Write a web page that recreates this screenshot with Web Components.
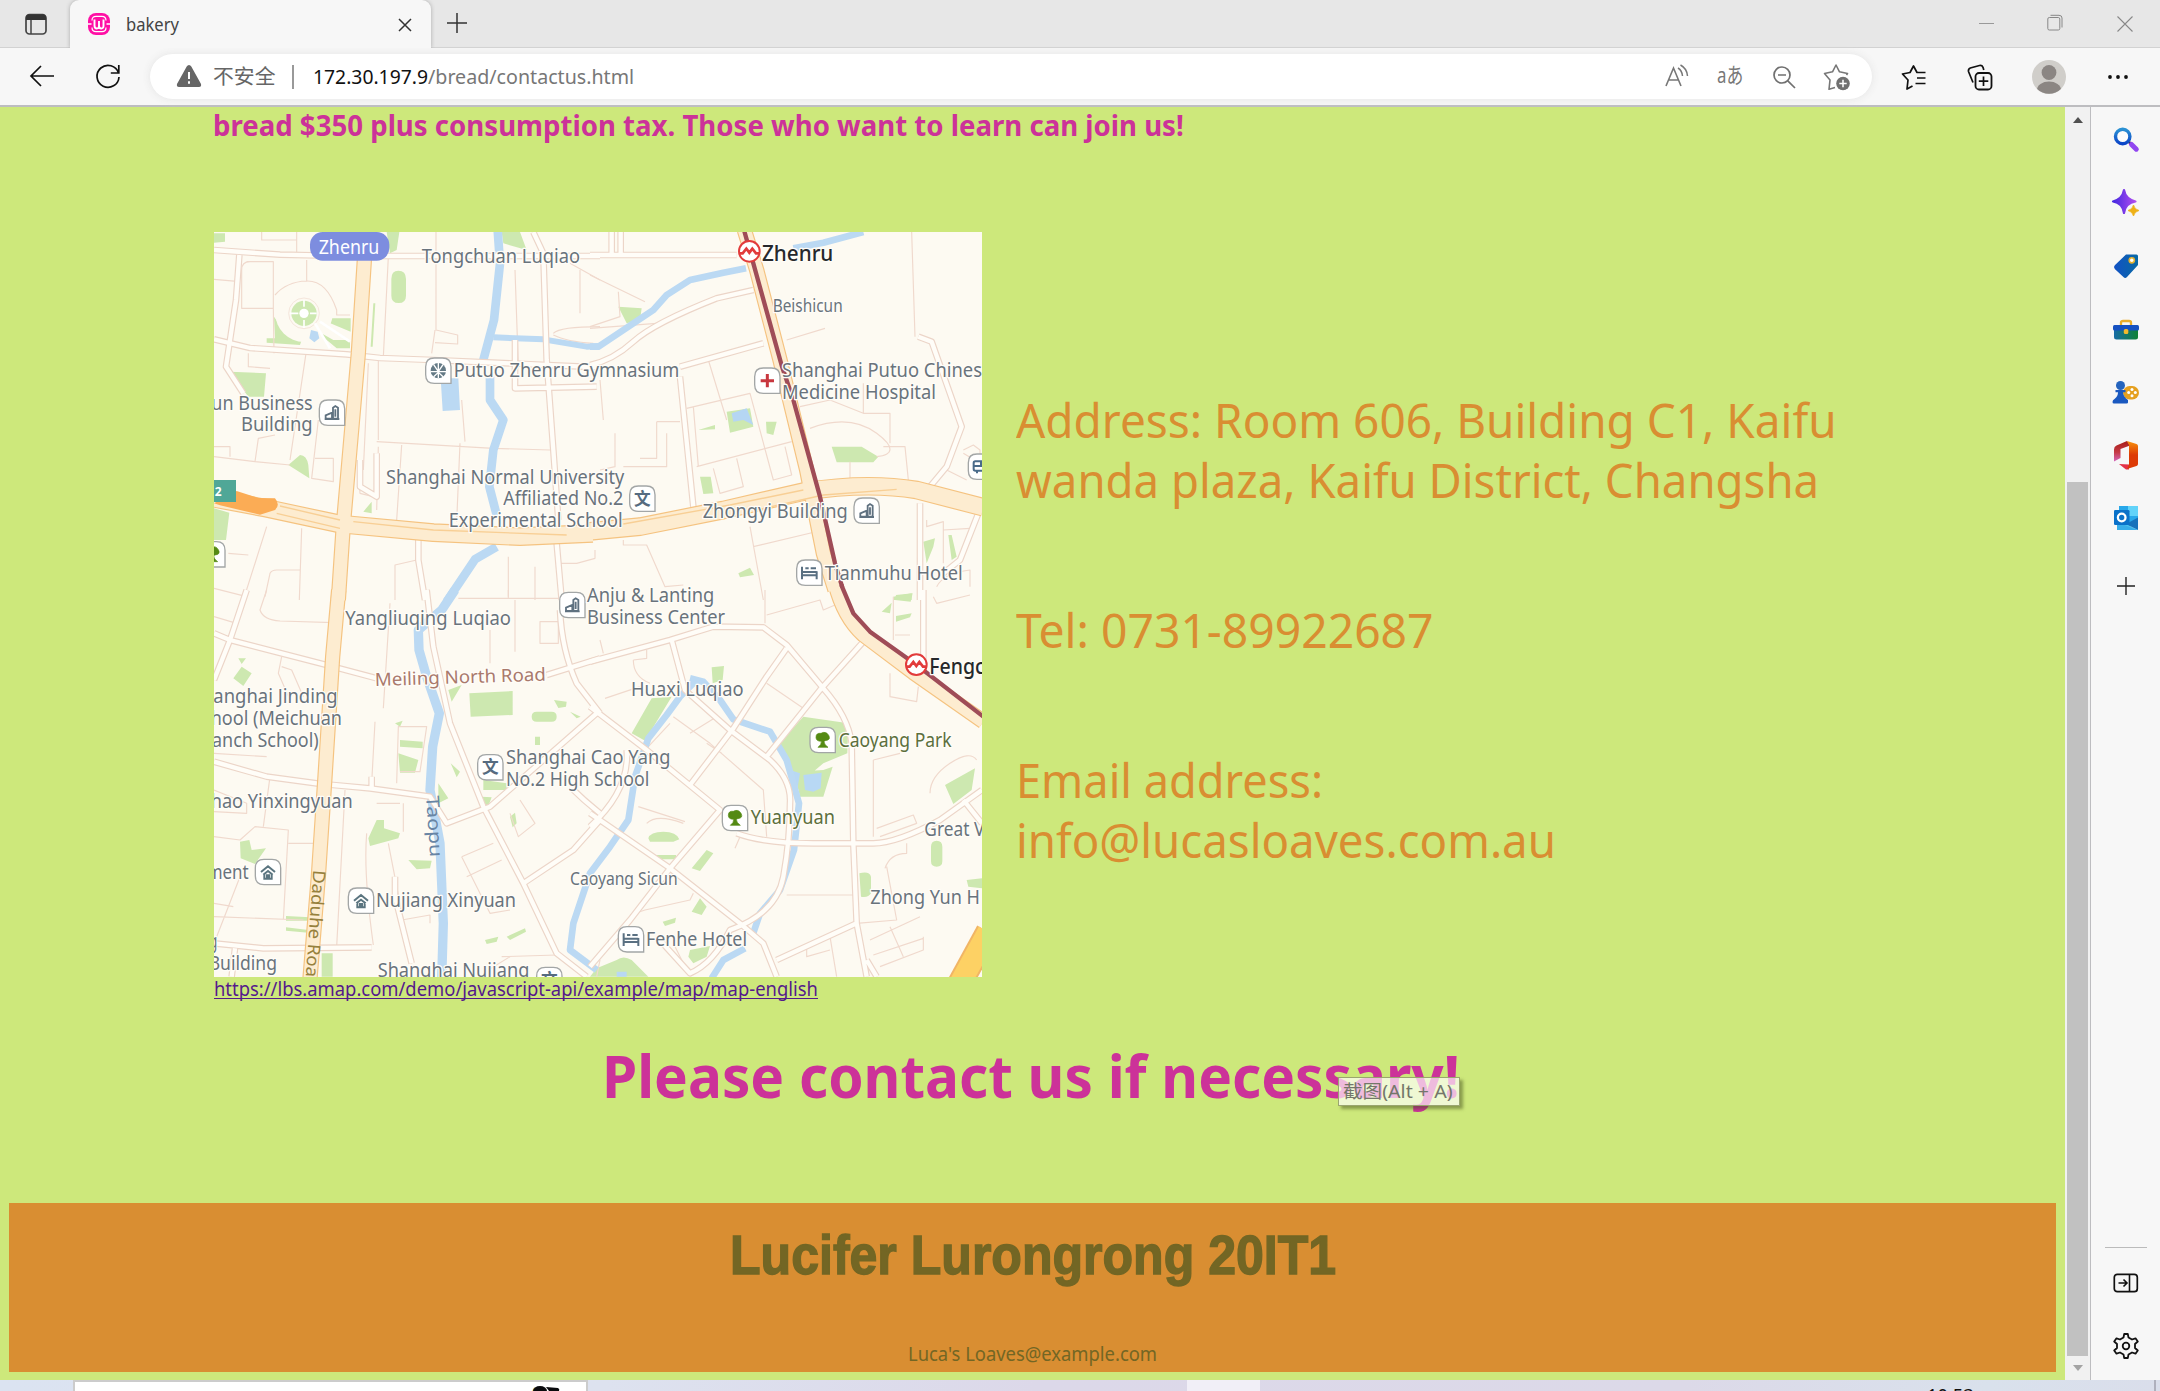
<!DOCTYPE html>
<html lang="en">
<head>
<meta charset="utf-8">
<title>bakery</title>
<style>
html,body{margin:0;padding:0;width:2160px;height:1391px;overflow:hidden;font-family:"Noto Sans","Noto Sans CJK SC",sans-serif}
</style>
</head>
<body>
<browser-window></browser-window>
<script>
const define=(name,html,setup)=>customElements.define(name,class extends HTMLElement{
  connectedCallback(){
    if(this.shadowRoot)return;
    this.attachShadow({mode:'open'}).innerHTML=html;
    if(setup)setup(this,this.shadowRoot);
  }
});

/* One line of text condensed or widened to a given width */
define('fit-text','<style>:host{display:inline-block;white-space:nowrap;vertical-align:top}span{display:inline-block;transform-origin:0 50%}</style><span><slot></slot></span>',(el,root)=>{
  const s=root.querySelector('span'),w=+el.getAttribute('w');
  s.style.transform='scaleX('+w/s.offsetWidth+')';
  el.style.width=w+'px';
});

/* Icons, drawn in the pixel size of their box */
const ICONS={
panel:[24,24,'<rect x="2" y="2.5" width="20" height="19.5" rx="3.5" fill="none" stroke="#444" stroke-width="1.7"/><path d="M2 8V5.5Q2 2.5 5.5 2.5h13Q22 2.5 22 5.5V8z" fill="#333"/><path d="M7 8v14" stroke="#444" stroke-width="1.5"/>'],
fav:[24,24,'<rect x="1" y="1" width="22" height="22" rx="8" fill="#ff0fa5"/><path d="M5 8.500Q5 4.300 9 4.300h6q4 0 4 4.200M5 15.500Q5 19.700 9 19.700h6q4 0 4-4.200" stroke="#fff" stroke-width="1.200" fill="none"/><path d="M7.500 7.500v6Q7.500 16.500 9.800 16.500T12 13.500V9M12 13.500Q12 16.500 14.300 16.500T16.500 13.500V7.500" stroke="#fff" stroke-width="1.900" fill="none"/><path d="M1 12h3.500M19.500 12H23" stroke="#fff" stroke-width="1.300"/>'],
x:[16,16,'<path d="M2 2l12 12M14 2L2 14" stroke="#333" stroke-width="1.5"/>'],
plus:[22,22,'<path d="M11 1v20M1 11h20" stroke="#333" stroke-width="1.500"/>'],
back:[26,24,'<path d="M25 12H2M12 2L2 12l10 10" fill="none" stroke="#111" stroke-width="1.700"/>'],
reload:[26,26,'<path d="M23.500 10A11 11 0 1 0 24 14M23.800 2v8h-8" fill="none" stroke="#111" stroke-width="1.700"/>'],
warn:[26,24,'<path d="M13 1Q14.500 1 15.300 2.500L25 20Q25.700 23 23 23H3Q.3 23 1 20L10.700 2.500Q11.500 1 13 1z" fill="#666"/><path d="M13 8v7M13 17.300v2.500" stroke="#fff" stroke-width="2"/>'],
read:[24,24,'<path d="M1 22L8.500 4 16 22M3.800 16h9.400" fill="none" stroke="#777" stroke-width="1.600"/><path d="M13 4q4 2.500 4.500 8M15.500 1q6.500 3.500 7 11" fill="none" stroke="#777" stroke-width="1.500"/>'],
zoomout:[24,24,'<circle cx="10" cy="10" r="8" fill="none" stroke="#707070" stroke-width="1.700"/><path d="M6 10h8M15.800 15.800L23 23" stroke="#707070" stroke-width="1.700"/>'],
staradd:[28,28,'<path d="M12 24.500L6 26.300 7 17 1.500 10.500l8-1.700L13 2l3.500 6.800 8 1.700-1 1.500" fill="none" stroke="#777" stroke-width="1.600" stroke-linejoin="round"/><circle cx="20" cy="20.500" r="6.800" fill="#707070"/><path d="M20 16.800v7.400M16.300 20.500h7.400" stroke="#fff" stroke-width="1.500"/>'],
starlist:[26,26,'<path d="M11.500 22L6 25 7 16 1.500 10l7.500-1.500L12.500 2 16 8.500h8.500M16 14h8.500M14.500 19.500h10" fill="none" stroke="#111" stroke-width="1.700" stroke-linejoin="round"/>'],
collect:[26,27,'<rect x="8.500" y="9" width="16" height="16.500" rx="3.500" fill="none" stroke="#111" stroke-width="1.800"/><path d="M16.500 12.500v9.500M11.800 17.200h9.500M6 18.500L1.500 7.500Q1 5 3.300 4L12.500 1.500Q15 1 16 3.300l.8 2.700" fill="none" stroke="#111" stroke-width="1.700"/>'],
avatar:[36,36,'<clipPath id="a"><circle cx="18" cy="18" r="16.800"/></clipPath><circle cx="18" cy="18" r="17" fill="#d0ceca"/><g clip-path="url(#a)" fill="#8b8683"><circle cx="18" cy="13.500" r="7.400"/><ellipse cx="18" cy="31" rx="12" ry="8.500"/></g>'],
dots:[22,6,'<g fill="#111"><circle cx="3" cy="3" r="1.900"/><circle cx="11" cy="3" r="1.900"/><circle cx="19" cy="3" r="1.900"/></g>'],
min:[16,16,'<path d="M0 8.500h15" stroke="#999"/>'],
max:[16,18,'<rect x=".8" y="3.500" width="12" height="12.500" rx="1.500" fill="none" stroke="#888"/><path d="M3.500 1.300H12Q15 1.300 15 4v9.500" fill="none" stroke="#888"/>'],
close:[16,16,'<path d="M.5.5l15 15M15.500.5l-15 15" stroke="#888" stroke-width="1.100"/>'],
search:[26,26,'<defs><linearGradient id="g" x2="0" y1="0" y2="1"><stop stop-color="#2b91d3"/><stop offset="1" stop-color="#0b45c8"/></linearGradient></defs><path d="M16 15l3 3" stroke="#333" stroke-width="2.500"/><path d="M18.500 17.500l4.800 4.700" stroke="#9146f0" stroke-width="5" stroke-linecap="round"/><circle cx="9.700" cy="9.500" r="7.200" fill="#fff" fill-opacity=".6" stroke="url(#g)" stroke-width="3.400"/>'],
spark:[28,28,'<defs><linearGradient id="g"><stop stop-color="#4528e0"/><stop offset="1" stop-color="#b04cf0"/></linearGradient></defs><path d="M12 1q1.500 9 11.500 11.500Q13.500 14 12 24 10.500 14 1 12.500 10.500 10 12 1z" fill="url(#g)" stroke="url(#g)" stroke-width="2.200" stroke-linejoin="round"/><path d="M21.500 16q1 4.500 5.500 5.500-4.500 1-5.500 5.500-1-4.500-5.500-5.500 4.500-1 5.500-5.500z" fill="#eeb117" stroke="#eeb117" stroke-width=".8"/>'],
tag:[26,26,'<defs><linearGradient id="g"><stop stop-color="#1352c5"/><stop offset="1" stop-color="#0869a4"/></linearGradient></defs><path d="M13 1.500h10.500Q25 1.500 25 3v9L14 24q-1.800 2-3.600 0L1.800 16q-1.600-2 0-3.800z" fill="url(#g)"/><circle cx="18.800" cy="7.300" r="2.600" fill="#fff" stroke="#e3b230" stroke-width="1.600"/>'],
toolbox:[28,22,'<defs><linearGradient id="g"><stop stop-color="#176ca6"/><stop offset="1" stop-color="#108235"/></linearGradient></defs><path d="M9 7V3.500Q9 2 11 2h6q2 0 2 1.500V7" fill="none" stroke="#eaad2b" stroke-width="2.300"/><path d="M2 9h24v9q0 2.500-2.500 2.500h-19Q2 20.500 2 18z" fill="url(#g)"/><rect x="1" y="6" width="26" height="5.500" rx="1.500" fill="#1551c1"/><rect x="11.800" y="10" width="4.500" height="5" rx="1.500" fill="#f3b92c"/>'],
games:[28,24,'<rect x="11" y="6" width="16" height="13.500" rx="6.700" fill="#e5a020"/><g fill="#fff"><circle cx="20" cy="9.500" r="1.500"/><circle cx="20" cy="15.700" r="1.500"/><circle cx="16.700" cy="12.600" r="1.500"/><circle cx="23.300" cy="12.600" r="1.500"/></g><circle cx="8.500" cy="5.500" r="4.500" fill="#2463bd"/><path d="M3.500 10h10v2.300h-2.500q0 4.500 5 7.700v2.500q0 1-1.500 1H2q-1.500 0-1.500-1.500 0-2 2-3 3.500-2.500 3.500-6.700H3.500z" fill="#1b59c0"/>'],
office:[26,30,'<defs><linearGradient id="g" x2="0" y2="1"><stop stop-color="#a71d17"/><stop offset=".55" stop-color="#c53a45"/><stop offset="1" stop-color="#d467bd"/></linearGradient><linearGradient id="h" x2="0" y2="1"><stop stop-color="#f7910c"/><stop offset=".5" stop-color="#dd3b06"/></linearGradient></defs><path d="M14 1L3.500 5.500Q1 6.500 1 9.500v12l6.500-3.500V9L17 5.500z" fill="url(#g)"/><path d="M6 24l10 .5v5H13z" fill="#e33148"/><path d="M14 1l9.500 3Q25 4.500 25 6v18q0 1.500-1.500 2L14 29l2-4.500V5z" fill="url(#h)"/>'],
outlook:[26,26,'<rect x="6" y="1" width="19" height="20" fill="#28a8ea"/><path d="M15 1h10v10H15z" fill="#62d3f9"/><path d="M4 14l21 11H6q-2 0-2-2z" fill="#4ac1ed"/><path d="M25 12.500V25L13 19z" fill="#1872bb"/><path d="M4 17l20 8H4z" fill="#38aeea"/><rect x="1" y="5" width="15.500" height="15" rx="1.300" fill="#0a71c9"/><circle cx="8.700" cy="12.500" r="3.800" fill="none" stroke="#fff" stroke-width="2.300"/>'],
plus2:[20,20,'<path d="M10 1v18M1 10h18" stroke="#222" stroke-width="1.400"/>'],
dock:[26,20,'<rect x="1.300" y="1.300" width="23" height="17.400" rx="3" fill="none" stroke="#111" stroke-width="1.700"/><path d="M16.500 1v18M5.500 10h8M10.500 6.500L14 10l-3.500 3.500" fill="none" stroke="#111" stroke-width="1.600"/>'],
gear:[26,26,'<path d="M10.500 4.500L11.200 1h3.600l.7 3.500 3.500 2 3.500-1.200L24.800 8.500 22 11v4l2.800 2.500-2.300 3.200L19 19.500l-3.500 2-.7 3.500h-3.600l-.7-3.500-3.500-2-3.500 1.200L1.200 17.500 4 15v-4L1.200 8.500l2.300-3.200L7 6.500z" fill="none" stroke="#111" stroke-width="1.800" stroke-linejoin="round"/><circle cx="13" cy="13" r="3.300" fill="none" stroke="#111" stroke-width="1.800"/>']
};
define('ui-icon','<style>:host{display:block;flex:none}svg{display:block;overflow:visible}</style>',(el,root)=>{
  const [w,h,body]=ICONS[el.getAttribute('name')];
  root.innerHTML+=`<svg width="${w}" height="${h}" viewBox="0 0 ${w} ${h}">${body}</svg>`;
});

define('tab-bar',`<style>
:host{display:flex;height:48px;background:#e7e7e7;box-shadow:inset 0 -1px #d2d2d2}
.tab{display:flex;width:361px;height:48px;background:#f7f7f7;border-radius:9px 9px 0 0;box-shadow:0 0 4px #aaa;clip-path:inset(0 -4px 0 -4px);font-size:17.5px;line-height:48px;color:#444}
ui-icon{align-self:flex-start}
</style>
<ui-icon name="panel" style="margin:12px 22px 0 24px"></ui-icon>
<div class="tab"><ui-icon name="fav" style="margin:12px 15px 0 17px"></ui-icon><fit-text w="53">bakery</fit-text><ui-icon name="x" style="margin:17px 0 0 218px"></ui-icon></div>
<ui-icon name="plus" style="margin:12px 1511px 0 15px"></ui-icon>
<ui-icon name="min" style="margin:15px 52px 0 0"></ui-icon><ui-icon name="max" style="margin:14px 54px 0 0"></ui-icon><ui-icon name="close" style="margin:16px 0 0"></ui-icon>`);

define('tool-bar',`<style>
:host{display:flex;height:57px;background:#f7f7f7;border-bottom:2px solid #bdbdc0}
.pill{display:flex;width:1722px;height:45px;margin:6px 0 0 29px;border-radius:23px;background:#fff;box-shadow:0 0 8px #e4e4e4;font-size:20.500px;line-height:45px;color:#777;flex:none}
.pill b{font-weight:400;color:#111}.sep{width:1.500px;height:24px;background:#999;margin:11px 19px 0 16px}
.aa{font:22px/45px "Noto Sans","Noto Sans CJK JP",sans-serif}
ui-icon{align-self:flex-start}
</style>
<ui-icon name="back" style="margin:16px 41px 0 29px"></ui-icon><ui-icon name="reload" style="margin:15px 0 0 -1px"></ui-icon>
<div class="pill"><ui-icon name="warn" style="margin:10px 11px 0 26px"></ui-icon><fit-text w="63" style="color:#666">不安全</fit-text><div class="sep"></div><fit-text w="115"><b>172.30.197.9</b></fit-text><fit-text w="206">/bread/contactus.html</fit-text>
<ui-icon name="read" style="margin:10px 28px 0 1031px"></ui-icon><fit-text class="aa" w="26" style="margin-top:-2px">aあ</fit-text><ui-icon name="zoomout" style="margin:11px 27px 0 29px"></ui-icon><ui-icon name="staradd" style="margin:9px 0 0"></ui-icon></div>
<ui-icon name="starlist" style="margin:16px 40px 0 29px"></ui-icon><ui-icon name="collect" style="margin:16px 38px 0 0"></ui-icon><ui-icon name="avatar" style="margin:11px 40px 0 0"></ui-icon><ui-icon name="dots" style="margin:26px 0 0"></ui-icon>`);

/* Street map. Geometry is in thirds of a pixel, in four sheets: A top left, B top right, C bottom left, D bottom right */
const SHEET={A:[0,0],B:[1170,0],C:[0,1110],D:[1170,1110]};
const LINES={
A:'M42 178L120 185M140 125H220V265H125V150Q125 125 150 125M220 265L222 400M185 36V60H290M290 36V105M320 120V185M225 225Q260 185 320 183T410 270V285H450M565 110L550 410M708 36V330L773 345V372L705 368M705 330L695 400M945 150L955 440M1140 150V280M1060 340Q1080 320 1200 320M1060 345Q1100 365 1180 370M145 400V440L210 445M318 400L270 720M42 710L165 725 270 735M165 725L175 655 225 645M345 715H400V785L335 775 355 600M530 665L880 685 1050 690M785 540L795 665M780 670L770 905M605 675L590 900M42 1105L140 1130M200 920L130 1140M305 925L298 1140M195 1130L210 1060Q215 1050 230 1050H300M85 1000L145 1005M585 1140V1035L650 1020M925 1010V1130M1005 1040V1140M1080 1030H1130L1185 1015V990M535 420V660M475 730L480 820 520 830M505 430L490 750M530 870L535 680M1110 130L1200 180M42 680H90V710',
B:'M0 165L165 245M85 215L90 290 0 320M200 310L0 325M965 36L975 350M355 420L410 600M290 565L480 520 550 780 605 765 585 680M320 740L605 665M310 560L325 740M440 715L460 800 390 820 370 745M590 360L705 325M200 605H270M200 605V715H150M230 640V740H100M75 640V740L30 750M30 480L40 600M630 560L720 540 820 580H900V670M820 490V580M660 625Q780 580 860 640T860 710M880 680H945L955 780M780 725V775M480 920L520 1140M490 980L700 930M100 960V975H170L225 1100 280 1095M1010 900V920L1060 905V1030M1060 930L1140 925M1120 690L1150 675 1170 690V730L1120 700M1070 750L1130 780M1040 1100Q1060 1060 1140 1050V1100',
C:'M200 0L180 60Q190 90 240 93L400 98M570 40L550 355M525 395L515 580M590 580L595 410H680L660 545H600M245 200L235 250 270 330M245 230L275 240 310 320M42 740L120 750 165 710 265 720 250 990M265 760H340M42 980L310 990M190 710L210 560M120 860L50 1040M500 730Q490 850 520 1065M565 760L635 1120M610 640V725M530 640H600M435 600L410 1070M605 990L690 975V1000M870 220V120M945 30V185M1020 95H1075V160H1020zM785 800L880 760M785 800L870 970 930 960M800 860L905 810M930 670L955 740 1005 700 960 630M905 1100L1070 1095M775 25H1080M925 0V25M865 1140L930 1100M42 600L140 640V670L42 665M42 80L110 100M42 490L200 500M42 940L100 950',
D:'M525 0V100M530 75L690 30 700 60 735 45M910 20V150M900 250V320L980 335 985 290M915 135H960M130 210L170 205V180M130 210Q130 260 180 280M250 380L360 460 520 600 530 740M530 280L640 355M350 460L395 490M380 380L300 430M850 510V740M850 510L930 490M1020 610Q1020 560 1080 520T1160 510M860 715L970 675 980 700 870 740M145 650L285 695M170 700Q200 670 280 700M435 775L450 740M590 915H790M890 830L920 990 800 1000M885 835Q900 790 950 790V760M120 975L165 960 300 930 310 910M650 1070V1100L720 1080M840 1050L990 980M850 1095L1000 1045M900 1010L940 1100M1000 1040V1080L870 1130M720 1040L740 1160M45 325L150 290M30 150L40 190M1030 20L1040 40 1140 15M250 1060L280 1120M30 1110L20 1160M240 400L175 470'
};
const ROADS=[
['A','M42 90L240 104 430 108H1200'],['A','M118 105L108 240 78 440 130 520'],['A','M42 358L150 384 440 403 540 414 700 420 1200 442'],['A','M1000 36L1030 100 1040 420 1060 690 1075 900M945 360V505L1190 500'],['A','M655 960V1020L675 1140'],['A','M1070 970L1085 1140'],['A','M480 720V800L530 830V700'],
['B','M0 105H440M65 36V105M92 36V105'],['B','M0 435Q70 420 130 365T380 235L490 210M270 440L520 370M270 470L310 860M985 350L1025 365 1115 620 1070 740 1020 800M990 850V1140M1165 880L1110 1020 1060 1060'],
['C','M42 130L90 150 380 225 530 265M90 150L42 270M90 150L140 0M42 515L200 560 350 580 400 585 510 595 690 620 740 700 870 650 1190 370M680 0L700 170 750 400 850 650 970 880 1070 1090 1160 1160M970 880L1120 780 1200 690M1080 60Q1085 180 1130 280L1200 370M1040 255L1200 205M42 1060L190 1075 515 1072M105 1075L95 1160M585 860V920L635 1120M515 560V600M1110 590Q1150 630 1200 670'],
['D','M0 215L240 150 370 110 520 112 590 165 700 295Q775 380 785 460L790 760 800 1000 830 1160M590 175L530 260 430 415 300 585M245 150L285 300 420 420 540 510Q605 570 600 640 600 750 580 860T420 1020Q370 1120 300 1150L200 1040M820 155L690 300 530 500M0 350L170 480 390 660 240 835 120 990 0 1130M0 670L240 835 450 1000 520 1060 560 1160M110 480Q120 600 0 710M440 730Q520 760 670 760H850Q920 760 1050 690L1176 600M1000 0V220M560 1110L800 1000M1120 630L1176 700M830 1110L860 1160']
];
const MAJOR=[['A','M495 90L475 400 430 915 415 1140'],['C','M416 0L398 200 375 560 355 860 330 1165'],['A','M42 835L200 865 420 912 700 938 960 950 1178 940'],['B','M0 934L150 920 400 870 640 815Q830 785 980 810L1180 862']];
const WATER=[['A',26,'M893 30L900 130 882 300 850 420M870 470V540L910 600 880 690 868 800 890 885M890 980L825 1018 740 1145'],['A',18,'M880 352L1030 358 1160 380 1200 378'],['B',20,'M0 380H25L190 270 230 225 300 180 400 158 468 145M610 85L700 68 820 36'],['C',28,'M765 0L725 60 655 120 657 180 680 260 718 370 698 470 690 600 720 760 730 1000 725 1170'],['D',20,'M320 270L270 320 230 375 175 445 135 560 115 690 60 770 0 850-50 1000-60 1080 20 1140M300 265L340 275 390 330 430 388 540 425 590 510 627 640 612 780 570 900 510 970 488 1035M465 1075L400 1110 365 1165']];
const GREEN={
A:'M42 40H75V65L42 68zM560 36H598L590 90 570 100zM905 36H960L980 90 910 70zM595 152q23 0 23 25v50q0 22-22 22t-22-22v-50q0-25 21-25zM222 290L260 345 305 360 300 375 200 368V355H225zM355 295H452V335zM320 310L410 385H450V360H400L330 320zM90 455L198 460 192 530H145zM265 735L300 705Q320 705 325 735L328 775zM42 865L88 878 78 960H42zM490 875L515 845V880zM520 250h6l-8 130h-6z',
B:'M85 260L155 265 150 300 110 310zM410 575L480 565 490 620 420 638zM325 630L375 615V628zM528 605H560L550 645 530 640zM725 680H815L865 710 850 727H740zM330 770H362L370 820 340 822zM1000 965L1035 955 1030 980 1010 1030zM1075 945H1085L1100 1010 1085 1020zM445 1060L480 1043 492 1065 450 1072zM910 1130L965 1120V1140H910z',
C:'M125 230L155 250 130 288 100 265zM115 205H138L125 222zM808 310L938 303V375L812 380zM1010 365H1055q15 0 15 15t-15 15H1010q-15 0-15-15t15-15zM1062 330L1100 335 1098 350 1075 354zM1110 365L1142 380 1130 385zM745 300L785 285 755 335zM1005 440h15v25h-15zM600 450L668 455V475L600 470zM595 490L655 510 645 548H600zM752 520L780 545 770 562zM585 400L608 392 600 410zM715 580L745 625 715 640zM530 690H552V715L600 730 595 745 510 768 505 745zM120 755L148 750 155 780 198 775 165 822 122 805zM625 810L695 812 690 835 650 838zM845 620L875 622 865 648 845 640zM930 680L945 668 950 700 938 712zM855 1050L895 1040 890 1055 860 1062zM920 1040L975 1015 978 1025 930 1050zM258 978L330 982V992H258zM258 1012L325 1020V1028L258 1022zM365 1090H398V1160H365zM850 570L920 580V600H850z',
D:'M185 325L245 320 165 452 125 430zM365 232L402 228 398 270 368 280zM640 380L775 400 772 490 700 520 670 545 600 545 568 460zM612 545L700 540 728 530 700 620 630 620zM1155 535L1065 585 1090 642 1145 600zM175 745Q180 725 220 725T268 748L250 755H180zM195 795H258V808H200zM305 835L350 780 370 790 330 843zM305 965L330 925 350 950 335 975zM218 995L258 983 255 998 225 1008zM300 1080L360 1068 350 1100 310 1120 295 1100zM80 1110Q100 1095 125 1110L175 1160H0L20 1135zM1040 752q17 0 17 18v44q0 16-17 16t-17-16v-44q0-18 17-18zM808 850q30-8 35 10v50q-8 14-30 10zM1130 870L1176 865V895L1135 890zM918 15L968 10 962 35 915 30zM875 65L905 38 900 70zM918 78L965 70 960 82 918 95z'
};
const POIS=[['A',715,452,'globe'],['A',396,578,'bld'],['A',37,1003,'tree'],['B',532,482,'plus'],['B',157,836,'school'],['B',830,872,'bld'],['B',658,1058,'bed'],['B',1173,740,'bus'],['C',1117,45,'bld'],['C',871,532,'school'],['C',204,846,'home'],['C',483,932,'home'],['C',1048,1170,'school'],['D',698,450,'tree'],['D',435,684,'tree'],['D',123,1048,'bed']];
const GLYPH={
globe:'<circle r="23" fill="#647a86"/><path d="M-24 3H24M-14-18L0 3 14-18M0-23V23M-14 18L0 5 14 18" stroke="#fff" stroke-width="4" fill="none"/>',
bld:'<path d="M-19 18V8L0 0V18zM3 18V-15L10-20 18-15V18zM-22 19H22M10-10V12" fill="none" stroke="#5f7180" stroke-width="5.500"/>',
tree:'<path d="M-20-8Q-20-22-5-20 10-28 18-14 26 0 8 2L4 4Q4 14 16 22H-14Q-3 14-4 4-20 4-20-8z" fill="#548a13" stroke="#548a13" stroke-width="2"/>',
plus:'<path d="M0-20V20M-20 0H20" stroke="#c8373f" stroke-width="9"/>',
bed:'<path d="M-22-18V20M-22 8H22M22-4V20M-22-2H22M-12-13H-2M4-13H20" stroke="#5a7082" stroke-width="6" fill="none"/>',
home:'<path d="M-21 0L0-17 21 0M-14 8L0-3 14 8M-11 5V20H-3V10H3V20H11V5" fill="none" stroke="#5b7580" stroke-width="6"/>',
bus:'<rect x="-22" y="-16" width="44" height="28" rx="5" fill="none" stroke="#4a6b8a" stroke-width="6"/><path d="M-22-2H22M0-16V-2M-12 12V20M12 12V20" stroke="#4a6b8a" stroke-width="6"/>',
school:'<text y="18" font-size="50" text-anchor="middle" font-weight="700" fill="#566b80" style="font-family:\'Noto Sans CJK SC\',sans-serif">文</text>'};
/* sheet, x, baseline, width, text, size, colour, rotation, weight */
const G='#69737c',K='#26282b',F='#5c6f3c';
const LABELS=[['A',358,101,182,'Zhenru',60,'#fff'],['A',667,127,475,'Tongchuan Luqiao'],['A',763,471,677,'Putuo Zhenru Gymnasium'],['A',36,568,304,'un Business'],['A',125,633,215,'Building'],['A',560,790,715,'Shanghai Normal University'],['A',912,855,360,'Affiliated No.2'],['A',748,920,522,'Experimental School'],
['B',518,122,214,'Zhenru',66,K,0,500],['B',550,274,210,'Beishicun',54],['B',578,471,600,'Shanghai Putuo Chines'],['B',578,537,462,'Medicine Hospital'],['B',340,893,435,'Zhongyi Building'],['B',706,1078,414,'Tianmuhu Hotel'],
['C',438,105,497,'Yangliuqing Luqiao'],['C',527,287,513,'Meiling North Road',54,'#a9796c',-1.800],['C',42,338,373,'anghai Jinding'],['C',34,405,394,'hool (Meichuan'],['C',38,471,320,'anch School)'],['C',34,654,426,'hao Yinxingyuan'],['C',22,866,126,'ment'],['C',530,950,420,'Nujiang Xinyuan'],['C',28,1072,26,'g'],['C',28,1138,205,'Building'],['C',535,1160,455,'Shanghai Nujiang'],['C',1163,35,382,'Anju &amp; Lanting'],['C',1163,100,414,'Business Center'],['C',920,520,493,'Shanghai Cao Yang'],['C',920,587,430,'No.2 High School'],['C',1112,885,323,'Caoyang Sicun',54],['C',680,618,184,'Taopu',54,'#6885a4',86],['C',342,838,322,'Daduhe Roa',52,'#96803c',94],
['D',125,317,338,'Huaxi Luqiao'],['D',748,470,339,'Caoyang Park',60,F],['D',484,702,253,'Yuanyuan',60,F],['D',1005,738,180,'Great V'],['D',843,940,329,'Zhong Yun H'],['D',170,1067,303,'Fenhe Hotel'],['D',1020,250,166,'Fengc',66,K,0,500]];
define('street-map','<style>:host{display:block;width:768px;height:745px;overflow:hidden}svg{display:block}text{font-family:"Noto Sans",sans-serif}</style>',(el,root)=>{
  const at=(q,s)=>`<g transform="translate(${SHEET[q]})">${s}</g>`;
  const p=(q,d,c,w)=>at(q,`<path d="${d}" fill="none" stroke="${c}" stroke-width="${w}" stroke-linejoin="round"/>`);
  let s='<rect x="42" y="36" width="2304" height="2235" fill="#fdfaf2"/>';
  for(const q in GREEN)s+=at(q,`<path d="${GREEN[q]}" fill="#cde8b0"/>`);
  s+=at('A','<circle cx="312" cy="280" r="86" fill="#fdfaf2"/><circle cx="312" cy="280" r="38" fill="#cde8b0"/><circle cx="312" cy="280" r="14" fill="#fff"/><path d="M270 280H295M330 280H350M312 240V260M312 300V325" stroke="#fff" stroke-width="5"/><path d="M333 330l20 5 5 20-15 12-15-12zM722 475H775L780 570 728 573z" fill="#bbd9f3"/><circle cx="312" cy="280" r="46" fill="none" stroke="#f5e6dc" stroke-width="3"/><path d="M345 310L390 385M360 305L450 365" stroke="#fff" stroke-width="8"/>');
  s+=at('B','<path d="M425 580L470 565 490 615 460 600 430 605z" fill="#b5d6f3"/>')+at('D','<path d="M640 555L695 548 692 595 670 605 645 600zM600 540l20 70 10-60zM80 1145h30v15H80z" fill="#b8d8f4"/>');
  for(const q in LINES)s+=p(q,LINES[q],'#f0d9cd',3.5);
  WATER.forEach(([q,w,d])=>s+=p(q,d,'#bbd9f3',w));
  ROADS.forEach(([q,d])=>s+=p(q,d,'#ecd5c8',20));
  ROADS.forEach(([q,d])=>s+=p(q,d,'#fffdf8',13));
  const M=[...MAJOR,['B','M463 30L500 150 570 420 650 750 700 1000 735 1110'],['D','M735-20Q760 80 820 135L970 248 1180 395']];
  M.forEach(([q,d],i)=>s+=p(q,d,'#f5c380',[46,46,56,56,46,46][i]));
  M.forEach(([q,d],i)=>s+=p(q,d,'#fdecd0',[39,39,49,49,39,39][i]));
  s+=p('A','M240 858L420 900M230 880L420 925M460 905L700 930 1100 945','#f8cf95',4)+p('B','M100 912L420 855 640 810M500 870L700 825 920 808','#f8cf95',4);
  s+=at('A','<path d="M42 850L110 813 175 834 225 835Q242 855 225 870L180 884 60 856z" fill="#fbac55"/><path d="M42 780H108V846H42z" fill="#50a797"/><text x="44" y="828" font-size="36" font-weight="700" fill="#fff">2</text><rect x="330" y="36" width="238" height="86" rx="38" fill="#7d8ddf"/>');
  s+=p('B','M462 30L490 130 576 440 610 540 690 830 735 1030 757 1102','#9f4c57',13)+p('D','M754-16L757-8 790 70 840 125 980 225 1180 380','#9f4c57',13);
  s+=p('D','M1195 1025L1110 1180','#f1b565',76)+p('D','M1195 1025L1110 1180','#fdd164',64);
  [['B',478,94],['D',979,224]].forEach(([q,x,y])=>s+=at(q,`<g transform="translate(${x} ${y})"><circle r="31" fill="#fff" stroke="#e23b3b" stroke-width="6"/><path d="M-30 6H-20L-9-8 0 4 9-8 20 6H30" fill="none" stroke="#e23b3b" stroke-width="8"/></g>`));
  POIS.forEach(([q,x,y,k])=>s+=at(q,`<g transform="translate(${x} ${y})"><path d="M38 38H-12Q-38 38-38 12V-12Q-38-38-12-38H12Q38-38 38-12z" fill="#fff" stroke="#a3a6a6" stroke-width="4"/>${GLYPH[k]}</g>`));
  LABELS.forEach(([q,x,y,w,t,f=60,c=G,r=0,b=450])=>s+=at(q,`<text transform="translate(${x-2} ${y+1}) rotate(${r})" textLength="${w}" lengthAdjust="spacingAndGlyphs" font-size="${f}" font-weight="${b}" fill="${c}" ${c=='#fff'||r>80?'':'stroke="#fffdf8" stroke-width="8" paint-order="stroke" stroke-linejoin="round"'}>${t}</text>`));
  root.innerHTML+=`<svg width="768" height="745" viewBox="42 36 2304 2235">${s}</svg>`;
});

define('contact-details',`<style>:host{display:flex;flex-direction:column;gap:90px;padding:158px 0 0 34px;font-size:47.500px;line-height:60px;color:#d98e32}div{display:flex;flex-direction:column}</style>
<div><fit-text w="821">Address: Room 606, Building C1, Kaifu</fit-text><fit-text w="803">wanda plaza, Kaifu District, Changsha</fit-text></div>
<div><fit-text w="418">Tel: 0731-89922687</fit-text></div>
<div><fit-text w="307">Email address:</fit-text><fit-text w="540">info@lucasloaves.com.au</fit-text></div>`);

define('page-footer',`<style>:host{display:flex;flex-direction:column;align-items:center;width:2047px;height:169px;margin:88px 0 0 9px;background:#d98e32;color:#736624}
.n{font:700 55px/60px "Liberation Sans",sans-serif;margin-top:22px;-webkit-text-stroke:1.4px}.m{font-size:19.500px;line-height:24px;margin-top:57px}</style>
<fit-text class="n" w="606">Lucifer Lurongrong 20IT1</fit-text><fit-text class="m" w="249">Luca's Loaves@example.com</fit-text>`);

define('tool-tip',`<style>:host{position:absolute;left:736px;top:42px;box-sizing:border-box;width:122px;height:29px;border:1.500px solid #9aa56f;background:rgba(255,255,255,.67);box-shadow:3px 3px 3px rgba(70,80,30,.5);font:400 18px/27px "Noto Sans","Noto Sans CJK SC",sans-serif;color:#74766a;padding-left:4px}</style><fit-text w="110">截图(Alt + A)</fit-text>`);

define('web-page',`<style>
:host{display:flex;flex-direction:column;width:2065px;height:1273px;background:#cde87b;overflow:hidden}
.lead{font-weight:700;font-size:28px;line-height:36px;height:34px;color:#cc3299;margin-left:213px}
.row{display:flex;margin:91px 0 0 214px;height:745px}
a{font-size:19.500px;line-height:24px;height:21px;color:#551a8b;margin-left:214px;text-decoration:none}
a fit-text{height:21px;border-bottom:1px solid #551a8b}
.ask{position:relative;font-weight:700;font-size:59px;line-height:81px;height:80px;color:#cc3299;margin:37px 0 0 602px}
</style>
<div class="lead"><fit-text w="971">bread $350 plus consumption tax. Those who want to learn can join us!</fit-text></div>
<div class="row"><street-map></street-map><contact-details></contact-details></div>
<a><fit-text w="604">https://lbs.amap.com/demo/javascript-api/example/map/map-english</fit-text></a>
<div class="ask"><fit-text w="858">Please contact us if necessary!</fit-text><tool-tip></tool-tip></div>
<page-footer></page-footer>`);

define('scroll-bar',`<style>:host{display:flex;flex-direction:column;align-items:center;width:25px;background:#f1f1f1;border-right:1px solid #bdbdc0}
i{border:5.500px solid transparent;border-top:0;border-bottom:6px solid #505050;margin-top:10px}
b{width:21px;height:874px;background:#c1c1c1;margin-top:359px}
u{border:5.500px solid transparent;border-bottom:0;border-top:6px solid #a3a3a3;margin-top:9px}</style><i></i><b></b><u></u>`);

define('side-bar',`<style>:host{display:flex;flex-direction:column;align-items:center;width:69px;background:#f7f7f7}hr{width:42px;height:1px;background:#bbb;border:0;margin:651px 0 0}</style>
<ui-icon name="search" style="margin-top:20px"></ui-icon><ui-icon name="spark" style="margin-top:36px"></ui-icon><ui-icon name="tag" style="margin-top:36px"></ui-icon><ui-icon name="toolbox" style="margin-top:40px"></ui-icon><ui-icon name="games" style="margin-top:39px"></ui-icon><ui-icon name="office" style="margin-top:36px"></ui-icon><ui-icon name="outlook" style="margin-top:35px"></ui-icon><ui-icon name="plus2" style="margin-top:45px"></ui-icon>
<hr><ui-icon name="dock" style="margin-top:25px"></ui-icon><ui-icon name="gear" style="margin-top:40px"></ui-icon>`);

define('task-bar',`<style>:host{display:flex;height:11px;overflow:hidden;background:linear-gradient(90deg,#dbe3f1,#dde2ef 28%,#dcd8e9 48%,#dcd9e8 78%,#d9e1ec 92%,#dadeeb)}
.s{box-sizing:border-box;width:515px;height:20px;border:2px solid #ccc;background:#fff;margin-left:73px}.s svg{display:block;margin-left:456px}
.t{width:73px;background:#f1eff7;margin-left:599px}.c{font-size:17.500px;line-height:20px;padding-top:5px;margin-left:667px;color:#111}.e{width:2px;background:#afb0bd;margin-left:180px}</style>
<div class="s"><svg width="34" height="9"><path d="M2 9L4 6" stroke="#f2cd4e" stroke-width="2"/><ellipse cx="9" cy="9" rx="7" ry="5" fill="#0a0b0e"/><path d="M15 5l12 1q2 1 1 3H18z" fill="#0a0b0e"/></svg></div><div class="t"></div><div class="c"><fit-text w="47">10:53</fit-text></div><div class="e"></div>`);

define('browser-window',`<style>:host{display:flex;flex-direction:column;width:2160px;height:1391px;overflow:hidden}main{display:flex;height:1273px}</style>
<tab-bar></tab-bar><tool-bar></tool-bar><main><web-page></web-page><scroll-bar></scroll-bar><side-bar></side-bar></main><task-bar></task-bar>`);
</script>
</body>
</html>
